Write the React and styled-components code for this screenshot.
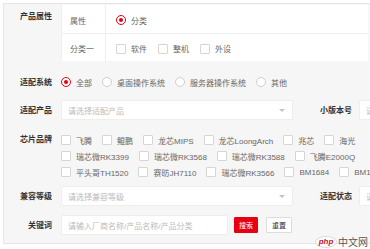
import React from "react";
import styled, { createGlobalStyle } from "styled-components";

const Global = createGlobalStyle`
  html, body { margin: 0; padding: 0; background: #fff; overflow: hidden; }
  body { font-family: "Liberation Sans", "Noto Sans CJK SC", sans-serif; font-size: 8px; color: #333; }
  * { box-sizing: border-box; }
`;

const Page = styled.div`
  position: relative;
  width: 370px;
  height: 249px;
  overflow: hidden;
  padding: 3px 0 0 3px;
`;

const Panel = styled.div`
  width: 460px;
  background: #f6f6f6;
  border: 1px solid #e6e6e6;
  padding: 1px 0 8px 0;
`;

const Row = styled.div`
  display: flex;
  align-items: ${(p) => (p.$top ? "flex-start" : "center")};
  margin-top: ${(p) => p.$mt || 0}px;
`;

const Label = styled.div`
  width: 48px;
  flex: none;
  text-align: right;
  font-weight: 700;
  color: #333;
  line-height: ${(p) => p.$lh || 11}px;
  padding-top: ${(p) => p.$pt || 0}px;
  margin-right: 9px;
  white-space: nowrap;
`;

const SideLabel = styled(Label)`
  margin-left: 11px;
  margin-right: 7px;
`;

const AttrTable = styled.div`
  width: 307px;
  background: #fff;
  border-left: 1px solid #eee;
`;

const AttrRow = styled.div`
  display: flex;
  height: ${(p) => p.$h}px;
  border-bottom: ${(p) => (p.$last ? "none" : "1px solid #eee")};
`;

const AttrKey = styled.div`
  width: 44px;
  flex: none;
  padding: 2px 0 0 8px;
  display: flex;
  align-items: center;
  color: #666;
  border-right: 1px solid #eee;
`;

const AttrVal = styled.div`
  display: flex;
  align-items: center;
  padding: 2px 0 0 10px;
`;

const Options = styled.div`
  display: flex;
  flex-wrap: wrap;
  align-items: center;
  width: ${(p) => (p.$w ? p.$w + "px" : "auto")};
`;

const Option = styled.label`
  display: flex;
  align-items: center;
  height: ${(p) => p.$h || 16}px;
  margin-right: ${(p) => p.$gap ?? 10}px;
  color: #666;
  white-space: nowrap;
`;

const Radio = styled.span`
  width: 10px;
  height: 10px;
  flex: none;
  border-radius: 50%;
  border: 1px solid ${(p) => (p.$on ? "#e60012" : "#cfcfcf")};
  background: #fff;
  margin-right: 5px;
  display: flex;
  align-items: center;
  justify-content: center;
  &::after {
    content: "";
    display: ${(p) => (p.$on ? "block" : "none")};
    width: 4px;
    height: 4px;
    border-radius: 50%;
    background: #e60012;
  }
`;

const Check = styled.span`
  width: 10px;
  height: 10px;
  flex: none;
  border: 1px solid #d6d6d6;
  border-radius: 1px;
  background: #fff;
  margin-right: 5px;
`;

const Field = styled.div`
  position: relative;
  width: ${(p) => p.$w}px;
  height: 20px;
  flex: none;
  background: #fff;
  border: 1px solid #eee;
  border-radius: 1px;
  display: flex;
  align-items: center;
  padding-left: 6px;
  color: #bbb;
  white-space: nowrap;
  overflow: hidden;
`;

const Arrow = styled.span`
  position: absolute;
  right: 7px;
  top: 8px;
  width: 0;
  height: 0;
  border-left: 3px solid transparent;
  border-right: 3px solid transparent;
  border-top: 3px solid #c4c4c4;
`;

const Button = styled.button`
  height: 16px;
  width: ${(p) => p.$w}px;
  margin-left: ${(p) => p.$ml}px;
  padding: 0;
  font-family: inherit;
  font-size: 7px;
  border-radius: 1px;
  border: 1px solid ${(p) => (p.$primary ? "#e60012" : "#dcdcdc")};
  background: ${(p) => (p.$primary ? "#e60012" : "#fff")};
  color: ${(p) => (p.$primary ? "#fff" : "#333")};
  display: flex;
  align-items: center;
  justify-content: center;
`;

const Watermark = styled.div`
  position: absolute;
  right: 2px;
  bottom: 1px;
  display: flex;
  align-items: center;
  height: 13px;
`;

const PhpBadge = styled.span`
  width: 22px;
  height: 12px;
  border-radius: 50%;
  background: #fff;
  border: 1px solid #d9d9d9;
  color: #c8102e;
  font-size: 8px;
  font-weight: 700;
  font-style: italic;
  display: flex;
  align-items: center;
  justify-content: center;
  line-height: 1;
`;

const WmText = styled.span`
  font-size: 10px;
  color: #555;
  margin-left: 1px;
  text-shadow: 0 0 1px #fff, 0 0 1px #fff;
`;

const chips = [
  "飞腾", "鲲鹏", "龙芯MIPS", "龙芯LoongArch", "兆芯", "海光",
  "瑞芯微RK3399", "瑞芯微RK3568", "瑞芯微RK3588", "飞腾E2000Q",
  "平头哥TH1520", "赛昉JH7110", "瑞芯微RK3566", "BM1684", "BM1684X",
];

const systems = ["全部", "桌面操作系统", "服务器操作系统", "其他"];

export default function App() {
  return (
    <>
      <Global />
      <Page>
        <Panel>
          <Row $top>
            <Label $pt={6}>产品属性</Label>
            <AttrTable>
              <AttrRow $h={29}>
                <AttrKey>属性</AttrKey>
                <AttrVal>
                  <Option>
                    <Radio $on />
                    分类
                  </Option>
                </AttrVal>
              </AttrRow>
              <AttrRow $h={27} $last>
                <AttrKey>分类一</AttrKey>
                <AttrVal>
                  {["软件", "整机", "外设"].map((t) => (
                    <Option key={t} $gap={11}>
                      <Check />
                      {t}
                    </Option>
                  ))}
                </AttrVal>
              </AttrRow>
            </AttrTable>
          </Row>

          <Row $mt={13}>
            <Label>适配系统</Label>
            <Options>
              {systems.map((s, i) => (
                <Option key={s}>
                  <Radio $on={i === 0} />
                  {s}
                </Option>
              ))}
            </Options>
          </Row>

          <Row $mt={10}>
            <Label>适配产品</Label>
            <Field $w={232}>
              请选择适配产品
              <Arrow />
            </Field>
            <SideLabel>小版本号</SideLabel>
            <Field $w={80}>请输入</Field>
          </Row>

          <Row $top $mt={12}>
            <Label $lh={16}>芯片品牌</Label>
            <Options $w={365}>
              {chips.map((c) => (
                <Option key={c}>
                  <Check />
                  {c}
                </Option>
              ))}
            </Options>
          </Row>

          <Row $mt={6}>
            <Label>兼容等级</Label>
            <Field $w={232}>
              请选择兼容等级
              <Arrow />
            </Field>
            <SideLabel>适配状态</SideLabel>
            <Field $w={80}>请选择</Field>
          </Row>

          <Row $mt={9}>
            <Label>关键词</Label>
            <Field $w={167}>请输入厂商名称/产品名称/产品分类</Field>
            <Button $primary $w={24} $ml={6}>搜索</Button>
            <Button $w={26} $ml={8}>重置</Button>
          </Row>
        </Panel>
        <Watermark>
          <PhpBadge>php</PhpBadge>
          <WmText>中文网</WmText>
        </Watermark>
      </Page>
    </>
  );
}
